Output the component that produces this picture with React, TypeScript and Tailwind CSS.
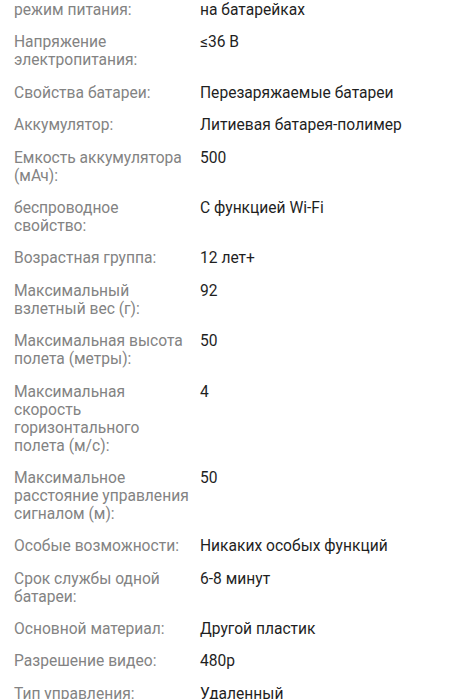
const specs: { label: string; value: string }[] = [
  { label: 'режим питания:', value: 'на батарейках' },
  { label: 'Напряжение электропитания:', value: '≤36 В' },
  { label: 'Свойства батареи:', value: 'Перезаряжаемые батареи' },
  { label: 'Аккумулятор:', value: 'Литиевая батарея-полимер' },
  { label: 'Емкость аккумулятора (мАч):', value: '500' },
  { label: 'беспроводное свойство:', value: 'С функцией Wi-Fi' },
  { label: 'Возрастная группа:', value: '12 лет+' },
  { label: 'Максимальный взлетный вес (г):', value: '92' },
  { label: 'Максимальная высота полета (метры):', value: '50' },
  { label: 'Максимальная скорость горизонтального полета (м/с):', value: '4' },
  { label: 'Максимальное расстояние управления сигналом (м):', value: '50' },
  { label: 'Особые возможности:', value: 'Никаких особых функций' },
  { label: 'Срок службы одной батареи:', value: '6-8 минут' },
  { label: 'Основной материал:', value: 'Другой пластик' },
  { label: 'Разрешение видео:', value: '480p' },
  { label: 'Тип управления:', value: 'Удаленный' },
];

export default function App() {
  return (
    <div
      className="w-[462px] h-[699px] overflow-hidden bg-white"
      style={{ fontFamily: 'Roboto, "Noto Sans", sans-serif' }}
    >
      <div className="flex flex-col gap-[14.4px] pl-[14px] pr-4 pt-px">
        {specs.map((row) => (
          <div key={row.label} className="flex gap-[9px] text-[15.6px] leading-[18px]">
            <div className="w-[177px] shrink-0 text-[#838383]">{row.label}</div>
            <div className="flex-1 text-[#1f1f1f]">{row.value}</div>
          </div>
        ))}
      </div>
    </div>
  );
}
